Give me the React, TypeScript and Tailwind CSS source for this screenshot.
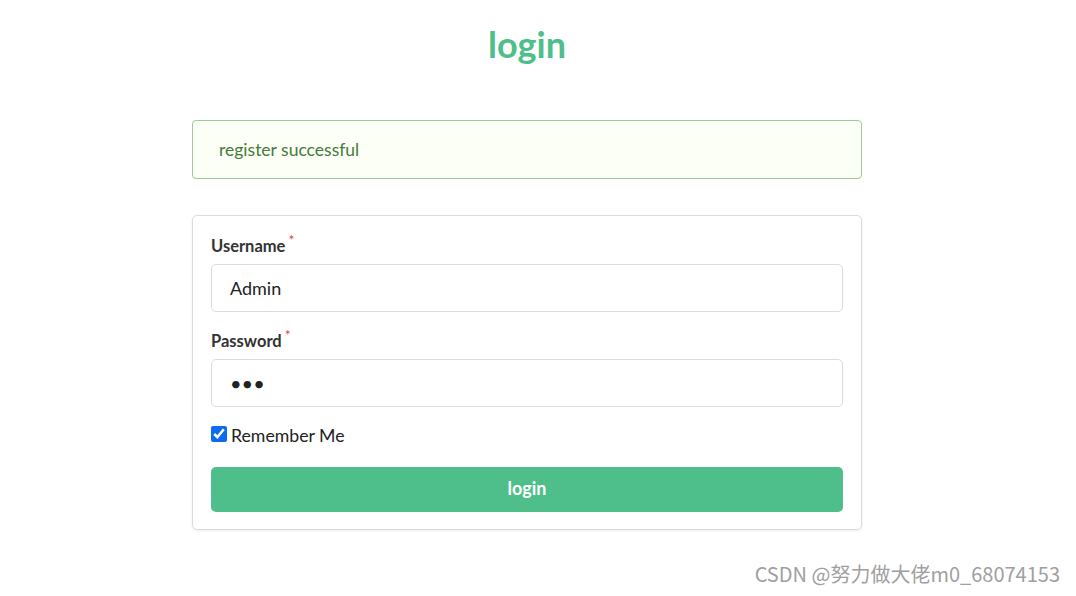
import React, { useState } from 'react';

const App: React.FC = () => {
  const [username, setUsername] = useState('Admin');
  const [password, setPassword] = useState('abc');
  const [remember, setRemember] = useState(true);

  return (
    <div className="relative min-h-[596px] w-full bg-white font-['Lato','Liberation_Sans',sans-serif] text-[#333]">
      <div className="ml-[192px] w-[670px] pt-[23px]">
        <h1 className="text-center text-[36px] font-bold leading-[42px] text-[#4ebe8b]">login</h1>

        <div className="mt-[55px] flex h-[59px] items-center rounded-[4px] border border-[#9ccc93] bg-[#fbfff5] px-[26px] pt-[2px] text-[17.5px] text-[#457a3c]">
          register successful
        </div>

        <form
          className="mt-[36px] rounded-[5px] border border-[#dcdcdc] px-[18px] pb-[17px] pt-[20px] shadow-[0_1px_3px_rgba(0,0,0,0.08)]"
          onSubmit={(e) => e.preventDefault()}
        >
          <label className="block text-[16.5px] font-bold leading-[20px] text-[#333]">
            Username<sup className="ml-[3px] text-[14px] font-normal text-[#e0454f]">*</sup>
          </label>
          <input
            value={username}
            onChange={(e) => setUsername(e.target.value)}
            className="mt-[8px] block h-[48px] w-full rounded-[5px] border border-[#dcdcdc] px-[18px] text-[18px] text-[#222] outline-none"
          />

          <label className="mt-[19px] block text-[16.5px] font-bold leading-[20px] text-[#333]">
            Password<sup className="ml-[3px] text-[14px] font-normal text-[#e0454f]">*</sup>
          </label>
          <input
            type="password"
            value={password}
            onChange={(e) => setPassword(e.target.value)}
            className="mt-[8px] block h-[48px] w-full rounded-[5px] border border-[#dcdcdc] px-[18px] text-[20px] text-[#222] outline-none"
          />

          <label className="mt-[16px] flex items-center gap-[4px] text-[17.7px] leading-[24px] text-[#222]">
            <input
              type="checkbox"
              checked={remember}
              onChange={(e) => setRemember(e.target.checked)}
              className="-mt-[4px] h-[16px] w-[16px] accent-[#0b6cf0]"
            />
            <span className="pt-[1px]">Remember Me</span>
          </label>

          <button
            type="submit"
            className="mt-[19px] block h-[45px] w-full rounded-[5px] bg-[#4ebe8b] pb-[2px] text-[18px] font-bold text-white"
          >
            login
          </button>
        </form>
      </div>

      <div className="absolute bottom-[7px] right-[16px] font-['Noto_Sans_CJK_SC',sans-serif] text-[20px] text-[#a0a0a0]">
        CSDN @努力做大佬m0_68074153
      </div>
    </div>
  );
};

export default App;
